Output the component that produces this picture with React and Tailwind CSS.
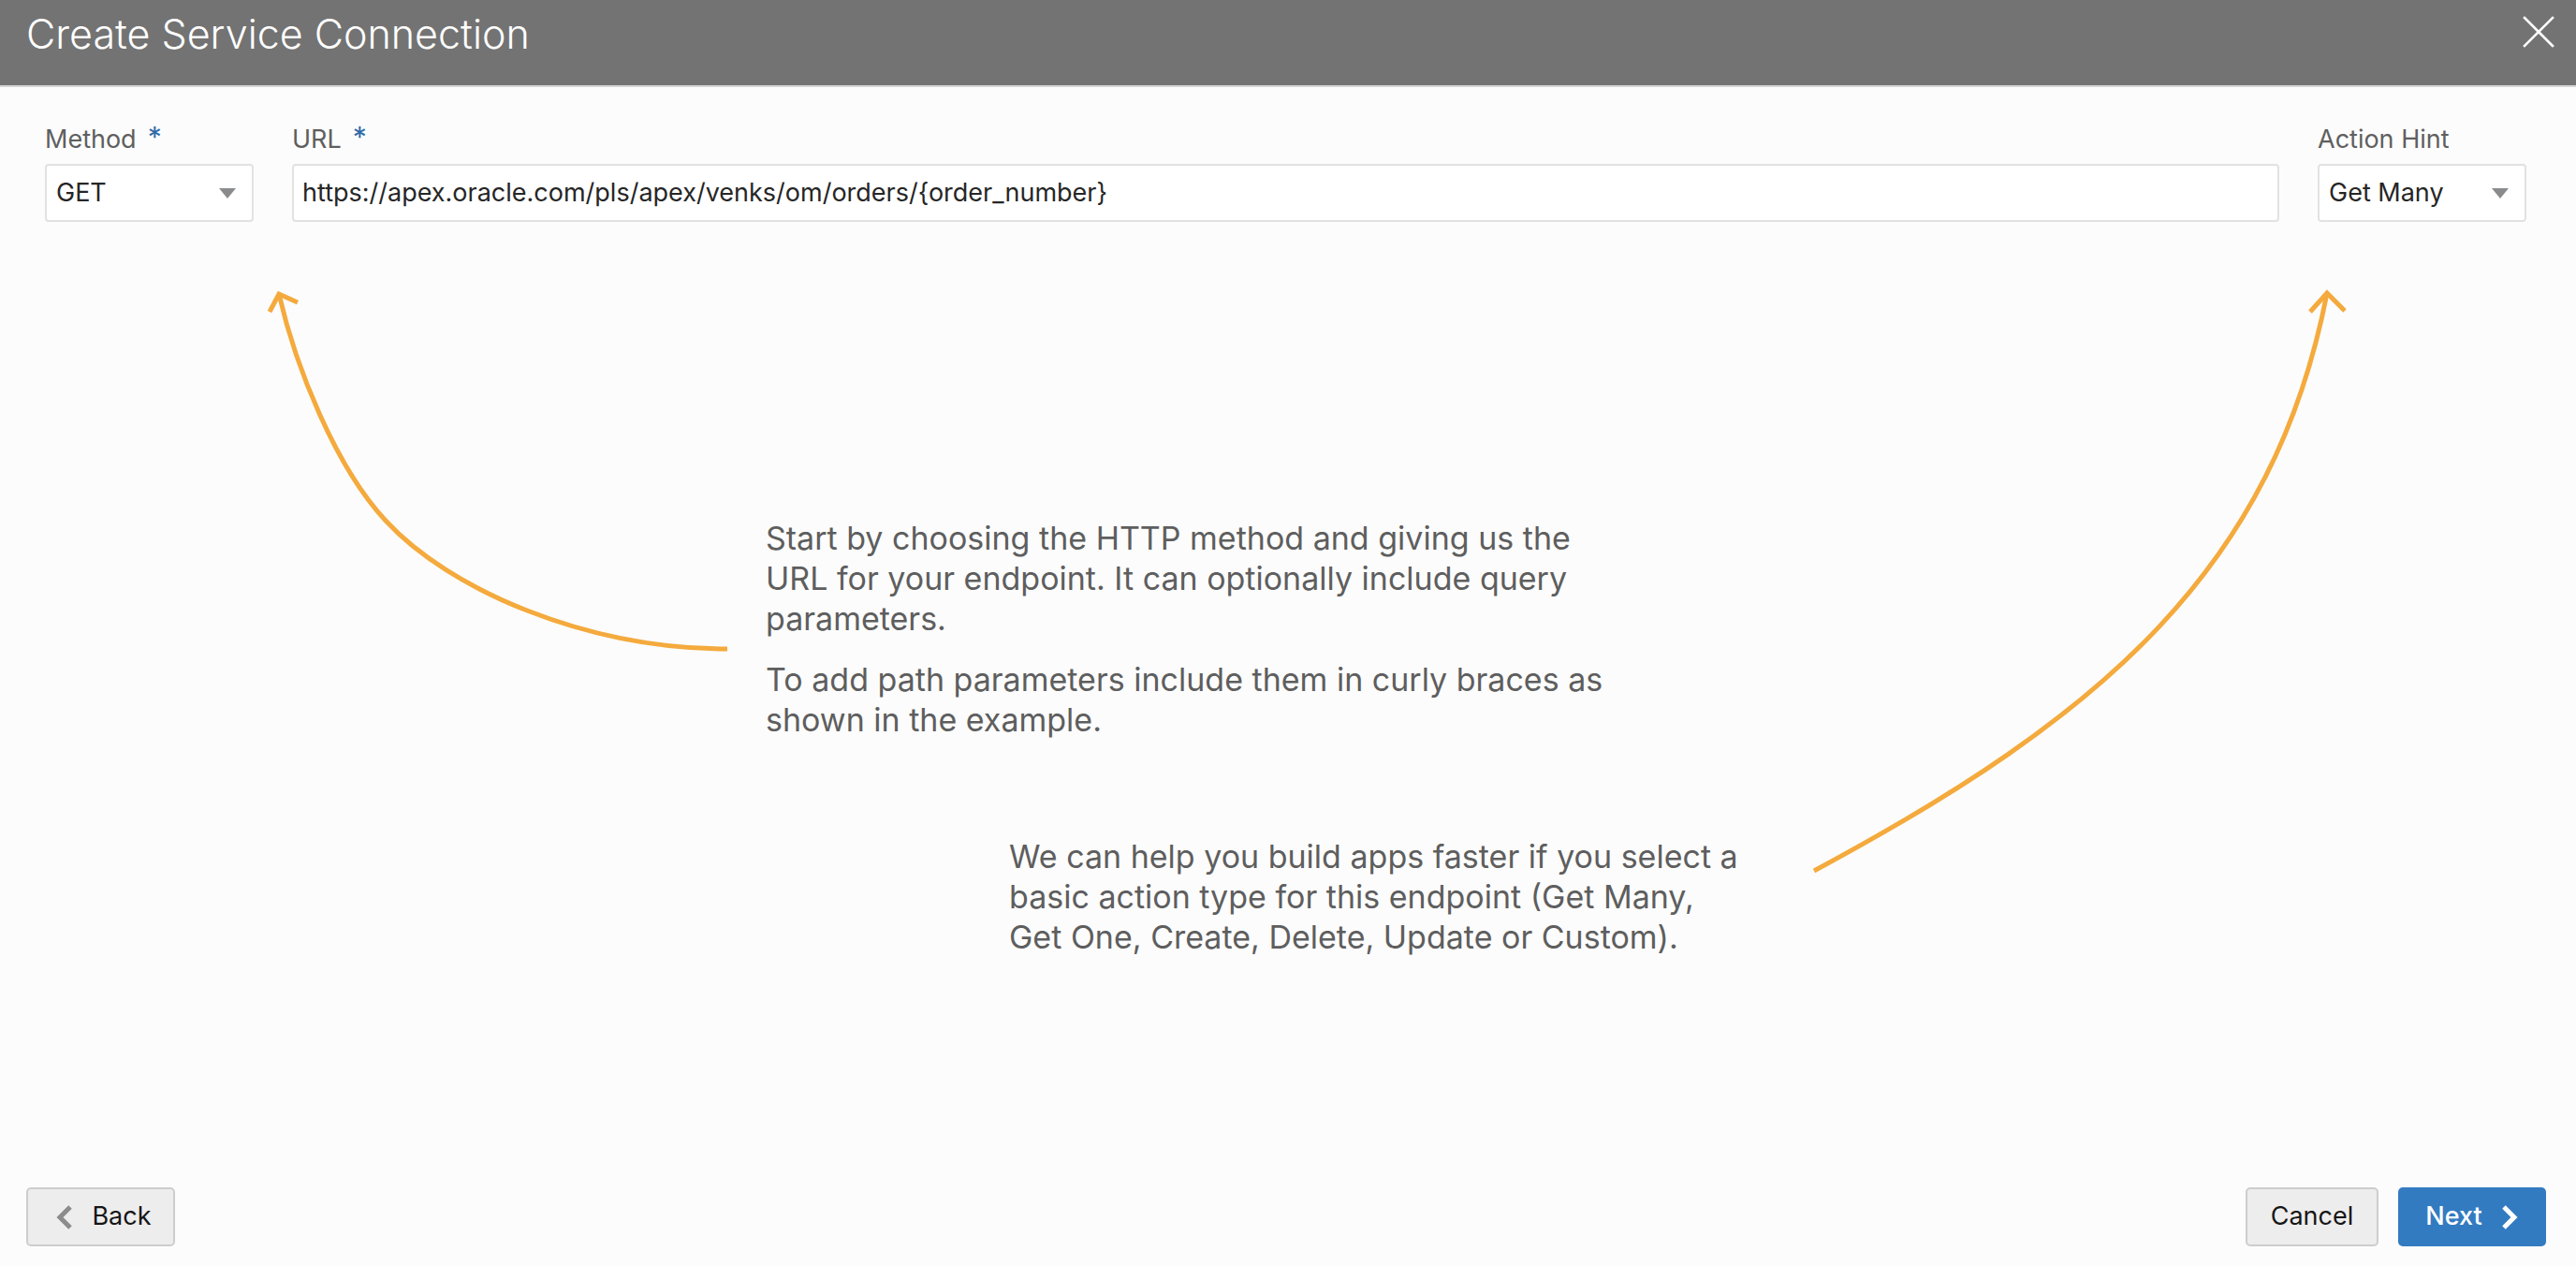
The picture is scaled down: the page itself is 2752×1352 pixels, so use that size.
import { useState } from 'react';

function Caret() {
  return (
    <svg width="18" height="11" viewBox="0 0 18 11" className="shrink-0">
      <path d="M0 0 L18 0 L9 11 Z" fill="#8a8b8d" />
    </svg>
  );
}

function Field({ label, required, children, className = '' }) {
  return (
    <div className={className}>
      <div className="flex items-start h-[34px] mb-[9px]">
        <span className="text-[27px] leading-[34px] text-[#5f5f5f]">{label}</span>
        {required && (
          <span className="ml-[12px] text-[30px] leading-[22px] text-[#2f6aa8] mt-[3px]">*</span>
        )}
      </div>
      {children}
    </div>
  );
}

function SelectBox({ value }) {
  return (
    <div className="h-[62px] bg-white border-2 border-[#e2e2e2] rounded-[4px] flex items-center justify-between pl-[10px] pr-[17px]">
      <span className="text-[27px] text-[#262626]">{value}</span>
      <Caret />
    </div>
  );
}

export default function App() {
  const [url] = useState('https://apex.oracle.com/pls/apex/venks/om/orders/{order_number}');

  return (
    <div className="relative h-[1352px] w-full flex flex-col bg-[#fcfcfc] [font-family:Inter,'Liberation_Sans',sans-serif] overflow-hidden">
      {/* Dialog title bar */}
      <div className="h-[93px] shrink-0 bg-[#737373] border-b-2 border-[#d4d4d4] flex items-start justify-between pl-[28px] pr-[23px]">
        <h1 className="pt-[11px] text-[43px] leading-[50px] font-light text-white">Create Service Connection</h1>
        <button type="button" className="mt-[17px]" aria-label="Close">
          <svg width="34" height="34" viewBox="0 0 34 34">
            <path d="M2 2 L32 32 M32 2 L2 32" stroke="#ffffff" strokeWidth="2.6" strokeLinecap="square" />
          </svg>
        </button>
      </div>

      {/* Method / URL / Action Hint */}
      <div className="flex items-start pt-[39px] pl-[48px] pr-[53px] gap-[41px]">
        <Field label="Method" required className="w-[223px] shrink-0">
          <SelectBox value="GET" />
        </Field>
        <Field label="URL" required className="flex-1">
          <div className="h-[62px] bg-white border-2 border-[#e2e2e2] rounded-[4px] flex items-center pl-[9px]">
            <span className="text-[27px] text-[#262626]">{url}</span>
          </div>
        </Field>
        <Field label="Action Hint" className="w-[223px] shrink-0">
          <SelectBox value="Get Many" />
        </Field>
      </div>

      {/* Help text */}
      <div className="flex-1 text-[34px] leading-[43px] text-[#5e5e5e]">
        <div className="ml-[818px] mt-[316px]">
          <p>
            Start by choosing the HTTP method and giving us the<br />
            URL for your endpoint. It can optionally include query<br />
            parameters.
          </p>
          <p className="mt-[22px]">
            To add path parameters include them in curly braces as<br />
            shown in the example.
          </p>
        </div>
        <p className="ml-[1078px] mt-[103px]">
          We can help you build apps faster if you select a<br />
          basic action type for this endpoint (Get Many,<br />
          Get One, Create, Delete, Update or Custom).
        </p>
      </div>

      {/* Footer buttons */}
      <div className="flex items-center justify-between pl-[28px] pr-[32px] pb-[21px]">
        <button
          type="button"
          className="w-[159px] h-[63px] flex items-center justify-center gap-[19px] pl-[6px] bg-[#ededed] border-2 border-[#cdcdcd] rounded-[5px] text-[27px] text-[#161616]"
        >
          <svg width="20" height="28" viewBox="0 0 20 28">
            <path d="M16 3 L5 14 L16 25" fill="none" stroke="#8c8c8c" strokeWidth="5" />
          </svg>
          Back
        </button>
        <div className="flex items-center gap-[21px]">
          <button
            type="button"
            className="w-[142px] h-[63px] flex items-center justify-center bg-[#ededed] border-2 border-[#cdcdcd] rounded-[5px] text-[27px] text-[#161616]"
          >
            Cancel
          </button>
          <button
            type="button"
            className="w-[158px] h-[63px] flex items-center justify-center gap-[19px] bg-[#337bc1] rounded-[5px] text-[27px] font-medium text-white"
          >
            Next
            <svg width="20" height="28" viewBox="0 0 20 28">
              <path d="M4 3 L15 14 L4 25" fill="none" stroke="#ffffff" strokeWidth="5" />
            </svg>
          </button>
        </div>
      </div>

      {/* Hand-drawn arrows pointing to URL and Action Hint */}
      <svg className="absolute inset-0 pointer-events-none" width="2752" height="1352" viewBox="0 0 2752 1352">
        <g fill="none" stroke="#f4aa3d" strokeWidth="5">
          <path d="M777 693 C627 693 480 630 412 556 C358 498 316 392 298 314" />
          <path d="M288 333 L298 314 L318 323" />
          <path d="M1938 930 C2246 765 2429 607 2486 313" />
          <path d="M2468 333 L2486 313 L2505 332" />
        </g>
      </svg>
    </div>
  );
}
